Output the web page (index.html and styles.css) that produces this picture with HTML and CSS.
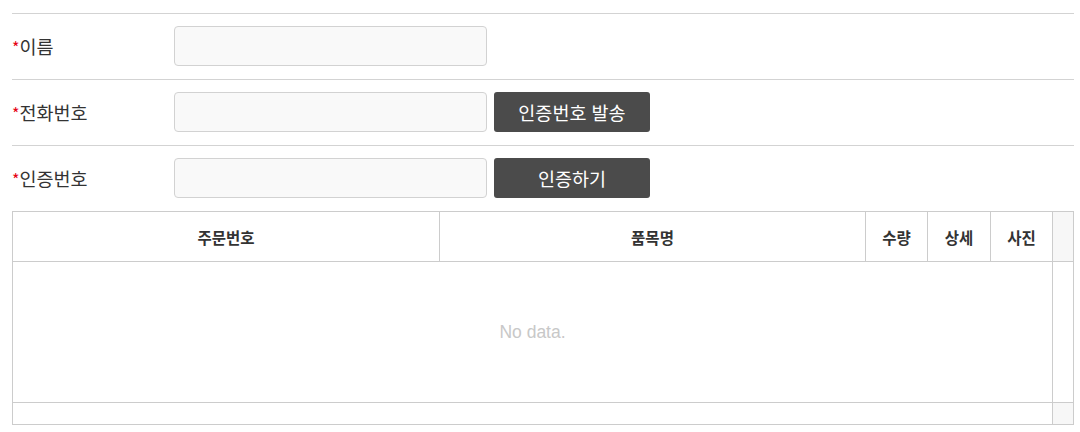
FILE: index.html
```html
<!DOCTYPE html>
<html lang="ko">
<head>
<meta charset="utf-8">
<title>주문 조회</title>
<link rel="stylesheet" href="styles.css">
</head>
<body>
<div class="page">
  <div class="form">
    <div class="row">
      <label class="label"><span class="req">*</span>이름</label>
      <input class="field" type="text">
    </div>
    <div class="row">
      <label class="label"><span class="req">*</span>전화번호</label>
      <input class="field" type="text">
      <button class="btn" type="button">인증번호 발송</button>
    </div>
    <div class="row last">
      <label class="label"><span class="req">*</span>인증번호</label>
      <input class="field" type="text">
      <button class="btn" type="button">인증하기</button>
    </div>
  </div>
  <div class="grid">
    <div class="ghead">
      <div class="th">주문번호</div>
      <div class="th">품목명</div>
      <div class="th">수량</div>
      <div class="th">상세</div>
      <div class="th">사진</div>
      <div class="th scroll"></div>
    </div>
    <div class="gbody">
      <div class="empty">No data.</div>
      <div class="scrollcol"></div>
    </div>
    <div class="gfoot">
      <div class="fcell"></div>
      <div class="fcell scroll"></div>
    </div>
  </div>
</div>
</body>
</html>
```
FILE: styles.css
```css
* { box-sizing: border-box; }
html, body { margin: 0; padding: 0; background: #fff; }
body {
  font-family: "Noto Sans CJK KR", "Noto Sans", sans-serif;
  color: #333;
}
.page {
  padding: 13px 0 0 12px;
  width: 1074px;
}
.form { width: 1062px; }
.row {
  display: flex;
  align-items: center;
  border-top: 1px solid #d3d3d3;
  height: 66px;
  padding: 12px 0 13px;
}
.label {
  width: 162px;
  font-size: 18.5px;
  color: #333;
  line-height: 24px;
}
.req { color: #e60012; font-size: 16px; }
.field {
  width: 313px;
  height: 40px;
  border: 1px solid #d2d2d2;
  border-radius: 4px;
  background: #f9f9f9;
  margin: 0;
  padding: 0 10px;
  font-family: inherit;
  font-size: 15px;
}
.btn {
  margin-left: 7px;
  width: 156px;
  height: 40px;
  border: 0;
  border-radius: 3px;
  background: #4b4b4b;
  color: #fff;
  font-family: inherit;
  font-size: 18.5px;
  padding: 0;
  cursor: pointer;
}
.grid {
  width: 1062px;
  border: 1px solid #cccccc;
}
.ghead {
  display: grid;
  grid-template-columns: 427px 426px 62px 63px 62px 20px;
  border-bottom: 1px solid #cccccc;
  height: 50px;
}
.th {
  border-right: 1px solid #cccccc;
  display: flex;
  align-items: center;
  justify-content: center;
  font-size: 15.5px;
  font-weight: bold;
  color: #333;
}
.th.scroll { border-right: 0; background: #f7f7f7; }
.gbody {
  display: grid;
  grid-template-columns: 1040px 20px;
  height: 141px;
  border-bottom: 1px solid #cccccc;
}
.empty {
  border-right: 1px solid #cccccc;
  display: flex;
  align-items: center;
  justify-content: center;
  font-family: "Liberation Sans", Arial, sans-serif;
  font-size: 17.5px;
  color: #c8c8c8;
}
.gfoot {
  display: grid;
  grid-template-columns: 1040px 20px;
  height: 21px;
}
.fcell { border-right: 1px solid #cccccc; }
.fcell.scroll { border-right: 0; background: #f7f7f7; }
```
